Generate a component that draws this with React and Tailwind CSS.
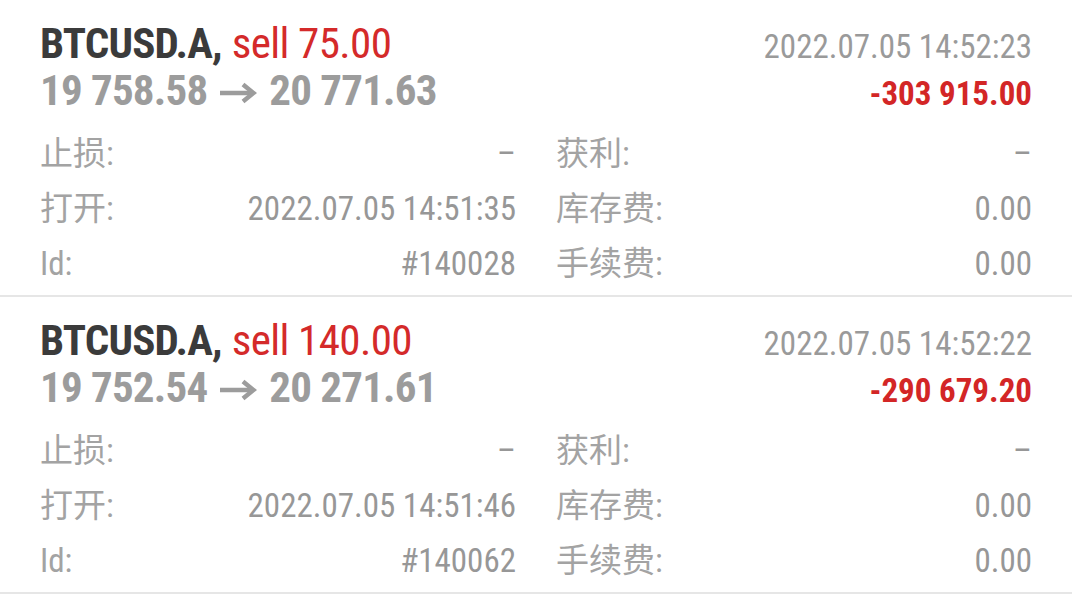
import React from "react";

const FONT = {
  fontFamily:
    '"Roboto Condensed", "Liberation Sans Narrow", "DejaVu Sans Condensed", Roboto, "Noto Sans CJK SC", sans-serif',
};

const positions = [
  {
    symbol: "BTCUSD.A,",
    side: "sell 75.00",
    from: "19 758.58",
    to: "20 771.63",
    time: "2022.07.05 14:52:23",
    profit: "-303 915.00",
    open: "2022.07.05 14:51:35",
    id: "#140028",
  },
  {
    symbol: "BTCUSD.A,",
    side: "sell 140.00",
    from: "19 752.54",
    to: "20 271.61",
    time: "2022.07.05 14:52:22",
    profit: "-290 679.20",
    open: "2022.07.05 14:51:46",
    id: "#140062",
  },
];

const Arrow = () => (
  <svg
    width="38"
    height="22"
    viewBox="0 0 38 22"
    className="mx-[12px] inline-block align-[1px]"
    fill="none"
    stroke="currentColor"
    strokeWidth="4.5"
  >
    <path d="M1 11H34" />
    <path d="M24 2.5L34.5 11L24 19.5" strokeLinejoin="miter" />
  </svg>
);

const Field = ({ label, value }) => (
  <div className="flex h-[55px] items-baseline justify-between leading-[55px]">
    <span className="text-[33px] text-[#a3a3a3]">{label}</span>
    <span className="text-[33px] text-[#979797]">{value}</span>
  </div>
);

const PositionCard = ({ p }) => (
  <div className="border-b-2 border-[#e6e6e6] px-10 pt-[20px] pb-[4px]">
    {/* header */}
    <div className="flex h-[47px] items-baseline justify-between leading-[47px]">
      <span className="text-[43px] font-bold text-[#3b3b3b]">
        <span className="tracking-[-0.8px]">{p.symbol}</span>{" "}
        <span className="font-normal tracking-[-0.6px] text-[#d42a2a]">{p.side}</span>
      </span>
      <span className="text-[33px] text-[#9a9a9a]">{p.time}</span>
    </div>
    <div className="flex h-[47px] items-baseline justify-between leading-[47px]">
      <span className="text-[43px] font-bold tracking-[-0.8px] text-[#9c9c9c]">
        {p.from}
        <Arrow />
        {p.to}
      </span>
      <span className="text-[33px] font-bold text-[#d32626]">{p.profit}</span>
    </div>

    {/* details */}
    <div className="mt-3 grid grid-cols-2 gap-x-10">
      <div>
        <Field label="止损:" value="–" />
        <Field label="打开:" value={p.open} />
        <Field label="Id:" value={p.id} />
      </div>
      <div>
        <Field label="获利:" value="–" />
        <Field label="库存费:" value="0.00" />
        <Field label="手续费:" value="0.00" />
      </div>
    </div>
  </div>
);

export default function App() {
  return (
    <div className="h-[600px] w-[1072px] overflow-hidden bg-white" style={FONT}>
      {positions.map((p) => (
        <PositionCard key={p.id} p={p} />
      ))}
    </div>
  );
}
